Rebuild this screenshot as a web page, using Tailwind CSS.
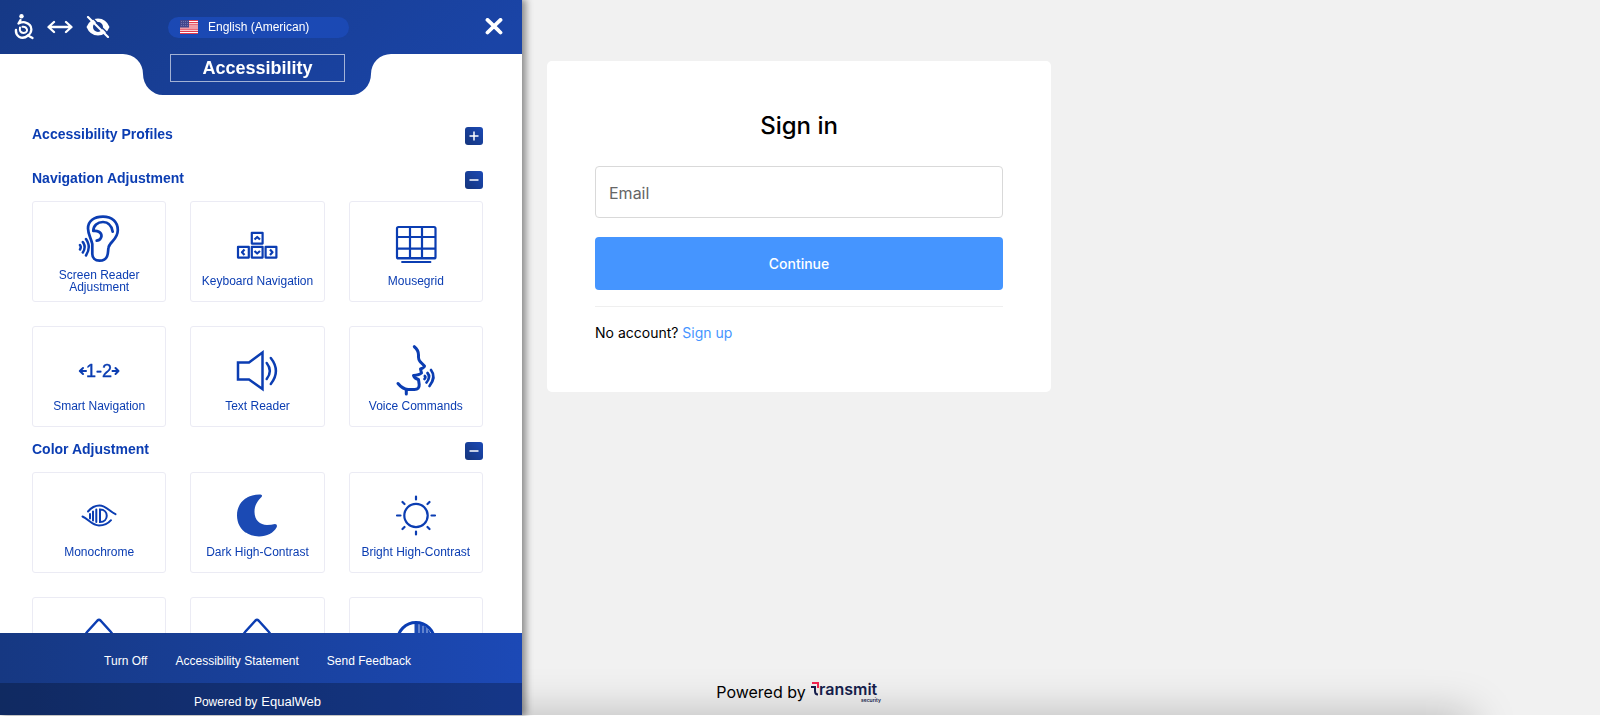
<!DOCTYPE html>
<html lang="en">
  <head>
    <meta charset="UTF-8" />
    <meta name="viewport" content="width=device-width, initial-scale=1.0" />
    <script src="https://cdn.jsdelivr.net/npm/@tailwindcss/browser@4"></script>
    <title>Sign in</title>
  </head>
  <body class="h-screen overflow-hidden border-b border-white bg-[#f1f1f1] font-['Inter',sans-serif] text-black">
    <!-- sign in page -->
    <div class="relative flex h-full flex-col items-center justify-between overflow-hidden pt-[61px] pr-0.5">
      <main class="w-full max-w-[504px] rounded-[5px] bg-white px-12 pt-[49px] pb-[49px]">
        <h1 class="text-center text-2xl leading-8 font-medium">Sign in</h1>
        <form class="mt-6 flex flex-col gap-[19px]">
          <input
            id="email"
            class="h-[52px] rounded border border-[#d9d9d9] px-[13px] pt-0.5 text-base placeholder:text-[#666666]"
            type="email"
            name="email"
            aria-label="Email"
            placeholder="Email"
          />
          <button class="h-[53px] rounded bg-[#4595ff] text-sm font-medium text-white" type="submit">
            Continue
          </button>
        </form>
        <hr class="mt-4 border-[#efefef]" />
        <p class="mt-4 text-sm leading-5">
          No account? <a class="text-[#4595ff]" href="#">Sign up</a>
        </p>
      </main>
      <footer class="relative z-10 mb-[11px] flex items-center gap-1">
        <span class="text-base leading-6">Powered by</span>
        <svg class="h-6 w-[72px] overflow-visible" viewBox="0 0 72 24" role="img" aria-label="Transmit Security">
          <path d="M2 3h6v5" fill="none" stroke="#f0254f" stroke-width="2" />
          <path d="M1 7h4v4q0 3.500 3 3.500" fill="none" stroke="#151d4a" stroke-width="2" />
          <text x="9" y="15" font-size="16" font-weight="600" fill="#151d4a">ransmit</text>
          <text x="51" y="22" font-size="5" font-weight="600" fill="#151d4a">security</text>
        </svg>
      </footer>
      <div class="absolute -bottom-10 left-0 h-10 w-[92%] shadow-[0_0_44px_0_rgba(0,0,0,0.25)]"></div>
    </div>

    <!-- accessibility panel -->
    <aside
      class="fixed top-0 bottom-px left-0 z-20 flex w-[522px] flex-col bg-white font-['Liberation_Sans',Arial,sans-serif] text-[#0b3db2] shadow-[3px_0_7px_1px_rgba(0,0,0,0.42)]"
    >
      <header class="relative h-[95px] shrink-0 text-white">
        <svg class="absolute inset-0 h-full w-full" viewBox="0 0 522 95" aria-hidden="true">
          <defs>
            <linearGradient id="head" x1="0" y1="0" x2="1" y2="0.2">
              <stop offset="0" stop-color="#163986" />
              <stop offset="1" stop-color="#1a44a6" />
            </linearGradient>
          </defs>
          <path d="M0 0H522V54H391A20 20 0 0 0 371 74A20 21 0 0 1 351 95H163A20 21 0 0 1 143 74A20 20 0 0 0 123 54H0Z" fill="url(#head)" />
        </svg>
        <div class="relative grid h-[54px] grid-cols-[1fr_auto_1fr] items-center pr-[19px] pl-[14px]">
          <div class="flex items-center gap-[13px]">
            <button type="button" aria-label="Accessibility menu position">
              <svg class="h-[26px] w-5" viewBox="0 0 20 26" fill="none" stroke="currentColor" stroke-linecap="round" stroke-linejoin="round">
                <circle cx="7.500" cy="2.300" r="2.200" fill="currentColor" stroke="none" />
                <path d="M6.500 6L4.500 9.500Q8 7.800 11 8.300Q17.800 10 17.300 16Q17 19.500 14 21.500L18.500 24" stroke-width="2.300" />
                <path d="M2 16Q1.500 20.500 5 22.700Q9.500 25.200 14 21.500" stroke-width="2.400" />
                <path d="M6 13.500Q5 18.500 9.500 19Q13.500 18.500 13 15.500Q12 12.500 8.500 12.800" stroke-width="2" />
              </svg>
            </button>
            <button type="button" aria-label="Widen">
              <svg class="h-4 w-[26px]" viewBox="0 0 26 16" fill="none" stroke="currentColor" stroke-width="2.300" stroke-linecap="round" stroke-linejoin="round">
                <path d="M2 8H24M7 3L1.500 8L7 13M19 3L24.500 8L19 13" />
              </svg>
            </button>
            <button type="button" aria-label="Hide">
              <svg class="h-[22px] w-6" viewBox="0 0 24 22">
                <path fill="currentColor" fill-rule="evenodd" d="M0.500 11Q4 2.500 12 2.500Q20 2.500 23.500 11Q20 19.500 12 19.500Q4 19.500 0.500 11ZM12 6A5 5 0 1 0 12 16A5 5 0 1 0 12 6Z" />
                <path d="M4 -.5L24 19.500" stroke="#183c8e" stroke-width="1.500" />
                <path d="M2 1L22 21" stroke="currentColor" stroke-width="2.200" stroke-linecap="round" />
              </svg>
            </button>
          </div>
          <button type="button" class="flex h-[21px] w-[181px] items-center gap-[10px] rounded-full bg-[#1b49b4] pl-3 text-xs">
            <svg class="h-[14px] w-[18px]" viewBox="0 0 18 14" aria-hidden="true">
              <path fill="#fff" d="M0 0h18v14H0z" />
              <path fill="none" stroke="#e23b4e" d="M0 .5h18M0 2.700h18M0 4.900h18M0 7h18M0 9.200h18M0 11.400h18M0 13.500h18" stroke-width="1.200" />
              <path fill="#43468c" d="M0 0h9v7.500H0z" />
              <path fill="none" stroke="#8587bb" stroke-width=".7" stroke-dasharray="1 1" d="M1 1.500h7M1 3.500h7M1 5.500h7" />
            </svg>
            English (American)
          </button>
          <button type="button" class="justify-self-end" aria-label="Close">
            <svg class="h-[18px] w-[18px]" viewBox="0 0 18 18" fill="none" stroke="currentColor" stroke-width="3.800" stroke-linecap="round">
              <path d="M2.500 1.900L15.500 14.500M15.500 1.900L2.500 14.500" />
            </svg>
          </button>
        </div>
        <h2 class="relative ml-[170px] flex h-7 w-[175px] items-center justify-center border border-white/60 text-lg font-bold">
          Accessibility
        </h2>
      </header>

      <div class="flex-1 overflow-hidden pt-8 pr-[39px] pl-8">
        <section class="flex items-start justify-between">
          <h3 class="text-sm leading-[14px] font-bold">Accessibility Profiles</h3>
          <button type="button" aria-label="Expand" class="flex size-[18px] items-center justify-center rounded-[3px] bg-linear-to-tr from-[#14347c] to-[#1b49b5] text-white">
            <svg class="size-[10px]" viewBox="0 0 10 10" stroke="currentColor" stroke-width="1.500"><path d="M.5 5h9M5 .5v9" /></svg>
          </button>
        </section>

        <section class="mt-[26px]">
          <div class="flex items-start justify-between">
            <h3 class="text-sm leading-[14px] font-bold">Navigation Adjustment</h3>
            <button type="button" aria-label="Collapse" class="flex size-[18px] items-center justify-center rounded-[3px] bg-linear-to-tr from-[#14347c] to-[#1b49b5] text-white">
              <svg class="size-[10px]" viewBox="0 0 10 10" stroke="currentColor" stroke-width="1.500"><path d="M.5 5h9" /></svg>
            </button>
          </div>
          <div class="mt-3 grid grid-cols-3 gap-6 text-xs leading-3">
            <button type="button" class="flex h-[101px] flex-col items-center rounded-[3px] border border-[#ebebf4] pt-2">
              <svg class="size-[60px]" viewBox="0 0 60 60" fill="none" stroke="currentColor" stroke-width="2.700" stroke-linecap="round" stroke-linejoin="round">
                <path d="M23.300 34C22 28 19 24 19 18.500C19 11 25 6.700 34 6.700C43 6.700 48.800 12 48.800 20C48.800 30 40.500 31.500 39.500 37.500C38.800 41 39.500 43 38 46.500C36.500 50 33.500 50.700 30.500 50.700C26 50.700 23.300 48 23.300 44Z" />
                <path d="M43.700 21.700C42.500 15 39 12 34 12C28.500 12 24.300 15.500 24.300 21C28 20.300 32.500 22 32.500 26Q32 30 27.700 30.700" />
                <path d="M17 29Q22.500 37 17 45.500M13.800 32Q17.500 37 13.800 42.500M11 35Q12.500 37 11 39.500" stroke-width="2.500" />
              </svg>
              <span class="-mt-px flex h-6 items-center px-3">Screen Reader Adjustment</span>
            </button>
            <button type="button" class="flex h-[101px] flex-col items-center rounded-[3px] border border-[#ebebf4] pt-2">
              <svg class="size-[60px]" viewBox="0 0 60 60" fill="none" stroke="currentColor" stroke-width="2.200" stroke-linejoin="round">
                <path d="M24.800 22.800h10.800v10.800H24.800zM11 36.800h10.800v10.800H11zM24.800 36.800h10.800v10.800H24.800zM38.600 36.800h10.800v10.800H38.600z" />
                <path d="M27.500 29.500L30.200 27L33 29.500M27.500 41L30.200 43.500L33 41M17.500 39.500L15 42.200L17.500 45M43 39.500L45.500 42.200L43 45" />
              </svg>
              <span class="-mt-px flex h-6 items-center">Keyboard Navigation</span>
            </button>
            <button type="button" class="flex h-[101px] flex-col items-center rounded-[3px] border border-[#ebebf4] pt-2">
              <svg class="size-[60px]" viewBox="0 0 60 60" fill="none" stroke="currentColor" stroke-width="2.200">
                <rect x="11" y="17" width="38.500" height="31.500" rx="1.500" />
                <path d="M24 17.500v31M36 17.500v31M11 27h38.500M11 38.700h38.500M11 48h38.500" />
                <path d="M16 52h28.500" stroke-width="1.800" stroke-linecap="round" />
              </svg>
              <span class="-mt-px flex h-6 items-center">Mousegrid</span>
            </button>
            <button type="button" class="flex h-[101px] flex-col items-center rounded-[3px] border border-[#ebebf4] pt-2">
              <svg class="size-[60px]" viewBox="0 0 60 60" fill="none" stroke="currentColor" stroke-width="2" stroke-linecap="round" stroke-linejoin="round" aria-hidden="true">
                <path d="M17 36H11M14 33L10.800 36L14 39M43.500 36H49.500M46.500 33L49.500 36L46.500 39" />
                <text x="30" y="42" text-anchor="middle" font-size="18" fill="currentColor" stroke-width=".4">1-2</text>
              </svg>
              <span class="-mt-px flex h-6 items-center">Smart Navigation</span>
            </button>
            <button type="button" class="flex h-[101px] flex-col items-center rounded-[3px] border border-[#ebebf4] pt-2">
              <svg class="size-[60px]" viewBox="0 0 60 60" fill="none" stroke="currentColor" stroke-width="2.500" stroke-linecap="round">
                <path d="M11 27.500H22L35.500 17.500V54L22 44.500H11Z" />
                <path d="M39.700 28Q46 36 39.700 44M43.800 23Q54 36 43.800 49" />
              </svg>
              <span class="-mt-px flex h-6 items-center">Text Reader</span>
            </button>
            <button type="button" class="flex h-[101px] flex-col items-center rounded-[3px] border border-[#ebebf4] pt-2">
              <svg class="size-[60px] overflow-visible" viewBox="0 0 60 60" fill="none" stroke="currentColor" stroke-width="3" stroke-linecap="round" stroke-linejoin="round">
                <path d="M28.300 11.700Q32.500 15 32.500 20Q32 25 35 27.500L38.500 31Q38.500 32.500 34.500 34L35.500 38Q33.500 40 27.500 40.500Q28.500 43.500 32.500 44.500L33.200 49.500Q33.500 54.500 28.500 54.500H22Q16.500 54 12 48.500M20.300 54.500V59" />
                <path d="M45 35Q50.500 42 43.500 51M41.500 38Q45 42 40.500 47.500M38.800 41Q40 42 38.500 44" stroke-width="2.700" />
              </svg>
              <span class="-mt-px flex h-6 items-center">Voice Commands</span>
            </button>
          </div>
        </section>

        <section class="mt-[15px]">
          <div class="flex items-start justify-between">
            <h3 class="text-sm leading-[14px] font-bold">Color Adjustment</h3>
            <button type="button" aria-label="Collapse" class="flex size-[18px] items-center justify-center rounded-[3px] bg-linear-to-tr from-[#14347c] to-[#1b49b5] text-white">
              <svg class="size-[10px]" viewBox="0 0 10 10" stroke="currentColor" stroke-width="1.500"><path d="M.5 5h9" /></svg>
            </button>
          </div>
          <div class="mt-3 grid grid-cols-3 gap-6 text-xs leading-3">
            <button type="button" class="flex h-[101px] flex-col items-center rounded-[3px] border border-[#ebebf4] pt-2">
              <svg class="size-[60px]" viewBox="0 0 60 60" fill="none" stroke="currentColor" stroke-width="2" stroke-linecap="round">
                <path d="M19 30.500Q24 24.500 30.500 24.500C37 24.500 40 30 46.500 33.200M13.500 35.500C20 38.500 23 44.500 30 44.500Q37.500 44.500 42 39.200" />
                <path d="M31 28.500C40 28.500 40 41 31 41ZM27.300 28.500V41M24 30.500V39.500M21 33V37.500" />
              </svg>
              <span class="-mt-px flex h-6 items-center">Monochrome</span>
            </button>
            <button type="button" class="flex h-[101px] flex-col items-center rounded-[3px] border border-[#ebebf4] pt-2">
              <svg class="size-[60px]" viewBox="0 0 60 60" fill="#1b4ab4">
                <path d="M33.500 13.500Q36 14 34.500 16C30.500 20 27.500 24 27.500 31C27.500 39 33 44 40 44Q44 44 48 43Q50.500 43 49.800 46C46.500 52 40 55.500 32 55.500C19 55.500 10 46.500 10 34.500C10 21.500 20 13 33.500 13.500Z" />
              </svg>
              <span class="-mt-px flex h-6 items-center">Dark High-Contrast</span>
            </button>
            <button type="button" class="flex h-[101px] flex-col items-center rounded-[3px] border border-[#ebebf4] pt-2">
              <svg class="size-[60px]" viewBox="0 0 60 60" fill="none" stroke="currentColor" stroke-width="2.200" stroke-linecap="round">
                <circle cx="30" cy="34.500" r="11.700" />
                <path d="M30 15.500v3M30 50.500v3M11 34.500h3.500M45.500 34.500H49M16.500 21l2 2M43.500 21l-2 2M16.500 48l2-2M43.500 48l-2-2" />
              </svg>
              <span class="-mt-px flex h-6 items-center">Bright High-Contrast</span>
            </button>
            <button type="button" aria-label="Monochrome colors" class="flex h-[101px] flex-col items-center rounded-[3px] border border-[#ebebf4] pt-2">
              <svg class="size-[60px]" viewBox="0 0 60 60" fill="none" stroke="currentColor" stroke-width="2.500" stroke-linejoin="round">
                <path d="M28.500 14.500Q30 13 31.500 14.500L41.500 25.500Q47 32 46 40A16 16 0 0 1 14 40Q13 32 18.500 25.500Z" />
              </svg>
            </button>
            <button type="button" aria-label="Saturation" class="flex h-[101px] flex-col items-center rounded-[3px] border border-[#ebebf4] pt-2">
              <svg class="size-[60px]" viewBox="0 0 60 60" fill="none" stroke="currentColor" stroke-width="2.500" stroke-linejoin="round">
                <path d="M28.500 14.500Q30 13 31.500 14.500L41.500 25.500Q47 32 46 40A16 16 0 0 1 14 40Q13 32 18.500 25.500Z" />
              </svg>
            </button>
            <button type="button" aria-label="Contrast" class="flex h-[101px] flex-col items-center rounded-[3px] border border-[#ebebf4] pt-2">
              <svg class="size-[60px]" viewBox="0 0 60 60" fill="none" stroke="currentColor" stroke-width="3">
                <path d="M28.500 17A18 18 0 0 1 28.500 53Z" fill="#1b4ab4" stroke="none" />
                <path d="M33 18v34M37 20v30M41 22v26" stroke="#a9bbe6" stroke-width="1" />
                <circle cx="30" cy="35" r="18.500" />
              </svg>
            </button>
          </div>
        </section>
      </div>

      <footer class="relative shrink-0 bg-linear-to-r from-[#163882] to-[#1c49b6] text-white">
        <nav class="flex h-[50px] items-center justify-center gap-7 pt-1.5 pr-[7px] text-xs">
          <a href="#">Turn Off</a>
          <a href="#">Accessibility Statement</a>
          <a href="#">Send Feedback</a>
        </nav>
        <p class="flex h-8 items-center justify-center gap-1 bg-black/25 pt-1.5 pr-[7px] text-xs">
          Powered by <a class="text-[13px]" href="#">EqualWeb</a>
        </p>
      </footer>
    </aside>
  </body>
</html>
